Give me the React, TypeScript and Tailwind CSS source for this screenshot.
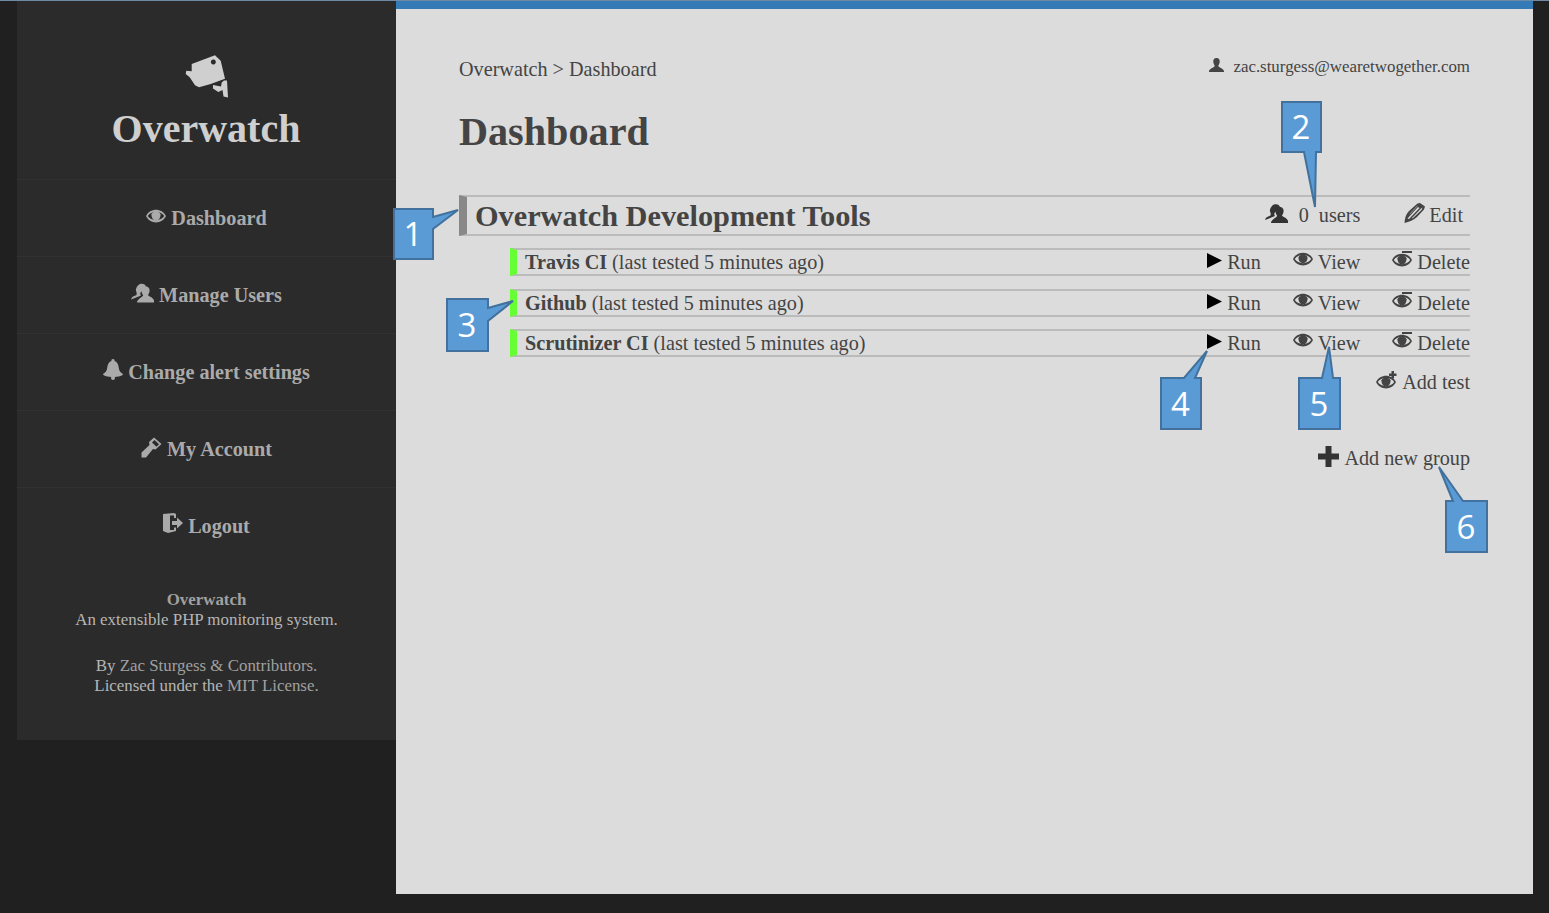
import type { ReactNode } from 'react'

type IconProps = { className?: string }

/* ── Icons ── */
function CameraIcon({ className }: IconProps) {
  return (
    <svg viewBox="0 0 43 44" className={className} fill="currentColor">
      <path fillRule="evenodd" d="M6.700 10 L30 1.300 L35.700 6.700 L40 24.700 L25.700 30 L14 33.300 L10 31.300 L4.700 23.300 L0.700 20 L1.300 16.700 L6.700 17.300 Z M28.300 5.500 a2.500 2.500 0 1 0 0.100 0 Z" />
      <path d="M28 31 L33.300 32 L36 32.500 L36.700 28.500 L39 26.500 L42 26.500 L43 43.500 L38.500 42.500 L37.500 36 L33.300 38 L28 34.500 Z" />
    </svg>
  )
}

function EyeIcon({ className }: IconProps) {
  return (
    <svg viewBox="0 0 20 14" className={className} fill="currentColor">
      <path fillRule="evenodd" d="M0 7 C4 -1.500 16 -1.500 20 7 C16 15.500 4 15.500 0 7 Z M1.800 7 C5 12.500 15 12.500 18.200 7 C15 1.500 5 1.500 1.800 7 Z" />
      <path d="M5.500 5.200 C7 1.500 13 1.500 14.500 5.200 C14.800 9 12.500 11.300 10 11.300 C7.500 11.300 5.200 9 5.500 5.200 Z" />
    </svg>
  )
}

function EyeDashIcon({ className }: IconProps) {
  return (
    <svg viewBox="0 0 20 16" className={className} fill="currentColor">
      <path fillRule="evenodd" d="M0 9 C4 .5 16 .5 20 9 C16 17.500 4 17.500 0 9 Z M1.800 9 C5 14.500 15 14.500 18.200 9 C15 3.500 5 3.500 1.800 9 Z" />
      <path d="M5.500 7.200 C7 3.500 13 3.500 14.500 7.200 C14.800 11 12.500 13.300 10 13.300 C7.500 13.300 5.200 11 5.500 7.200 Z" />
      <rect x="10" y="0" width="10" height="2" />
    </svg>
  )
}

function EyePlusIcon({ className }: IconProps) {
  return (
    <svg viewBox="0 0 21 18" className={className} fill="currentColor">
      <path fillRule="evenodd" d="M0 11 C4 2.500 16 2.500 20 11 C16 19.500 4 19.500 0 11 Z M1.800 11 C5 16.500 15 16.500 18.200 11 C15 5.500 5 5.500 1.800 11 Z" />
      <path d="M5.500 9.200 C7 5.500 13 5.500 14.500 9.200 C14.800 13 12.500 15.300 10 15.300 C7.500 15.300 5.200 13 5.500 9.200 Z" />
      <path d="M15.500 0 H18 V2.500 H20.500 V5 H18 V7.500 H15.500 V5 H13 V2.500 H15.500 Z" />
    </svg>
  )
}

function UsersIcon({ className }: IconProps) {
  return (
    <svg viewBox="0 0 23 19" className={className} fill="currentColor">
      <path d="M9 0.500 C12 -0.500 14.500 1 15 3 L9.500 9 C9 10.500 9.500 11.500 10 12 L4 14.500 L0 16 C0.500 13.500 2 12.800 5.500 11.500 C6 9.500 5.500 8.500 5 7.500 C4.500 5 6.500 1.500 9 0.500 Z" />
      <path d="M14.500 3 C17.500 3 19 5 18.500 8 C18.300 9.500 17.500 10.500 17 11.500 C17.500 13 22 13.500 23 17 L23 19 L6 19 C6 15.500 11.500 13.500 12.200 12 C11.500 10.500 10.500 9.500 10.500 7.500 C10.500 5 12 3 14.500 3 Z" />
    </svg>
  )
}

function UserIcon({ className }: IconProps) {
  return (
    <svg viewBox="0 0 15 14" className={className} fill="currentColor">
      <path d="M7.500 0 C10 0 11 1.800 10.700 4 C10.500 5.800 9.600 6.800 9.300 8 C9.600 9.500 14 10 15 13 L15 14 L0 14 L0 13 C1 10 5.400 9.500 5.700 8 C5.400 6.800 4.500 5.800 4.300 4 C4 1.800 5 0 7.500 0 Z" />
    </svg>
  )
}

function BellIcon({ className }: IconProps) {
  return (
    <svg viewBox="0 0 20 21" className={className} fill="currentColor">
      <path d="M10 0 C11.200 0 11.800 0.800 11.600 2 C14.500 3 15.500 6 15.800 9 C16 12 18 14 20 15 C20 17 15 18 10 18 C5 18 0 17 0 15 C2 14 4 12 4.200 9 C4.500 6 5.500 3 8.400 2 C8.200 0.800 8.800 0 10 0 Z" />
      <circle cx="10" cy="19" r="2" />
    </svg>
  )
}

function KeyIcon({ className }: IconProps) {
  return (
    <svg viewBox="0 0 21 21" className={className} fill="currentColor">
      <path fillRule="evenodd" d="M13 0.500 L20.500 7 L14.500 12.500 L12 12 L5 20.500 L0.500 20.500 L0.500 15.500 L8.500 8 L8 5 Z M13.500 3 L11 5.500 L15.500 9.800 L18 7.200 Z" />
    </svg>
  )
}

function LogoutIcon({ className }: IconProps) {
  return (
    <svg viewBox="0 0 20 20" className={className} fill="currentColor">
      <path d="M0 1 L11 0 L13 1 L13 5 L11 5 L11 2.500 L7 2.500 L7 17 L11 17 L11 14.500 L13 14.500 L13 18 L5 20 L0 18 Z" />
      <path d="M9 8 L14 8 L14 4.500 L20 10 L14 15.500 L14 12 L9 12 Z" />
    </svg>
  )
}

function PencilIcon({ className }: IconProps) {
  return (
    <svg viewBox="0 0 21 20" className={className} fill="currentColor">
      <path fillRule="evenodd" d="M0.500 20 C0.800 15 2 11 5 8 L13.500 0.500 L16 0 L21 3.500 L20 6.500 L13 14 C10 17 5 19 0.500 20 Z M3.500 15.500 L14 4 L15.500 5 L5 16 Z M7.500 15.500 L17 5.500 L18.500 4.500 L17.500 7 L9 15 Z M5 11.500 L13 3 L14 2.500 L6.500 10.500 Z" />
    </svg>
  )
}

function PlayIcon({ className }: IconProps) {
  return (
    <svg viewBox="0 0 15 15" className={className} fill="currentColor">
      <path d="M0 0 L15 7.500 L0 15 Z" />
    </svg>
  )
}

function PlusIcon({ className }: IconProps) {
  return (
    <svg viewBox="0 0 21 21" className={className} fill="currentColor">
      <path d="M7.500 0 H13.500 V7.500 H21 V13.500 H13.500 V21 H7.500 V13.500 H0 V7.500 H7.500 Z" />
    </svg>
  )
}

/* ── Annotation callouts drawn over the screenshot ── */
type CalloutDef = { n: number; x: number; y: number; w: number; h: number; outline: string }

const CALLOUTS: CalloutDef[] = [
  { n: 1, x: 393, y: 208, w: 40, h: 51, outline: '2,2 41,2 41,10 66,3 41,22 41,52 2,52' },
  { n: 2, x: 1281, y: 101, w: 40, h: 51, outline: '2,2 41,2 41,52 36,52 35,107 24,52 2,52' },
  { n: 3, x: 446, y: 298, w: 42, h: 53, outline: '2,2 43,2 43,11 68,4 43,24 43,54 2,54' },
  { n: 4, x: 1160, y: 377, w: 41, h: 52, outline: '2,2 25,2 48,-25 36,2 42,2 42,53 2,53' },
  { n: 5, x: 1298, y: 377, w: 42, h: 52, outline: '2,2 25,2 32,-29 36,2 43,2 43,53 2,53' },
  { n: 6, x: 1445, y: 500, w: 42, h: 52, outline: '2,2 9,2 -5,-32 19,2 43,2 43,53 2,53' },
]

function Callout({ n, x, y, w, h, outline }: CalloutDef) {
  return (
    <div className="absolute" style={{ left: x - 1, top: y - 1, width: w + 2, height: h + 2 }}>
      <svg className="absolute inset-0 overflow-visible" width={w + 2} height={h + 2}>
        <polygon points={outline} fill="#5b9bd5" stroke="#41719c" strokeWidth="2" />
      </svg>
      <span className="absolute inset-0 flex items-center justify-center font-['Open_Sans',sans-serif] text-[33px] leading-none text-white">
        {n}
      </span>
    </div>
  )
}

/* ── Sidebar ── */
const NAV: { label: string; icon: ReactNode }[] = [
  { label: 'Dashboard', icon: <EyeIcon className="w-[20px] h-[14px] mb-[4px]" /> },
  { label: 'Manage Users', icon: <UsersIcon className="w-[23px] h-[20px] mb-[4px]" /> },
  { label: 'Change alert settings', icon: <BellIcon className="w-[20px] h-[21px] mb-[5px]" /> },
  { label: 'My Account', icon: <KeyIcon className="w-[21px] h-[21px] mb-[4px]" /> },
  { label: 'Logout', icon: <LogoutIcon className="w-[20px] h-[20px] mb-[6px]" /> },
]

function Sidebar() {
  return (
    <aside className="w-[379px] h-[740px] ml-[17px] shrink-0 bg-[#2b2b2b] text-[#aaaaaa]">
      <div className="h-[179px] pt-[54px] pr-[1px] flex flex-col items-center">
        <CameraIcon className="w-[43px] h-[44px] text-[#cfcfcf]" />
        <div className="mt-[8px] text-[40px] leading-[46px] font-bold text-[#cfcfcf]">Overwatch</div>
      </div>
      {NAV.map(({ label, icon }) => (
        <div key={label} className="h-[77px] border-t border-[#323232] flex items-center justify-center gap-[5px] text-[20.200px] font-bold">
          {icon}
          <span>{label}</span>
        </div>
      ))}
      <div className="mt-[26px] text-center text-[16.900px] leading-[20px] text-[#b5b5b5]">
        <div className="font-bold text-[#a0a0a0]">Overwatch</div>
        <div>An extensible PHP monitoring system.</div>
        <div className="mt-[26px]">By <span className="text-[#a0a0a0]">Zac Sturgess &amp; Contributors.</span></div>
        <div>Licensed under the <span className="text-[#a0a0a0]">MIT License.</span></div>
      </div>
    </aside>
  )
}

/* ── Dashboard content ── */
const TESTS = [
  { name: 'Travis CI', mt: 'mt-[12px]' },
  { name: 'Github', mt: 'mt-[13px]' },
  { name: 'Scrutinizer CI', mt: 'mt-[12px]' },
]

function TestRow({ name, mt }: { name: string; mt: string }) {
  return (
    <div className={`${mt} ml-[51px] h-[28px] flex items-center justify-between border-l-[7px] border-l-[#66ff33] border-y-2 border-y-[#bbbbbb] pl-[8px] text-[20.200px] leading-none`}>
      <div><span className="font-bold">{name}</span> (last tested 5 minutes ago)</div>
      <div className="flex items-center gap-[32px]">
        <span className="flex items-center gap-[5px]">
          <PlayIcon className="w-[15px] h-[15px] text-black mb-[3px]" />Run
        </span>
        <span className="flex items-center gap-[5px]">
          <EyeIcon className="w-[20px] h-[14px] mb-[5px]" />View
        </span>
        <span className="flex items-center gap-[5px]">
          <EyeDashIcon className="w-[20px] h-[16px] mb-[6px]" />Delete
        </span>
      </div>
    </div>
  )
}

function Content() {
  return (
    <main className="w-[1137px] h-[893px] mt-px shrink-0 bg-[#dcdcdc] border-t-8 border-t-[#337ab7] px-[63px] text-[#444444]">
      <div className="pt-[48px] flex items-center justify-between">
        <div className="text-[20.200px] leading-[24px]">Overwatch &gt; Dashboard</div>
        <div className="flex items-center gap-[9px] text-[16.900px] leading-[20px] -mt-[5px]">
          <UserIcon className="w-[15px] h-[14px] mb-[3px]" />
          zac.sturgess@wearetwogether.com
        </div>
      </div>
      <h1 className="mt-[28px] text-[40.200px] leading-[46px] font-bold">Dashboard</h1>
      <div className="mt-[40px] h-[41px] flex items-center justify-between border-l-[8px] border-l-[#888888] border-y-2 border-y-[#bbbbbb] pl-[8px] pr-[7px]">
        <div className="pt-px text-[30.300px] font-bold leading-none">Overwatch Development Tools</div>
        <div className="flex items-center text-[20.200px] leading-none">
          <UsersIcon className="w-[23px] h-[19px] mb-[5px] text-[#333333]" />
          <span className="ml-[11px]">0</span>
          <span className="ml-[10px]">users</span>
          <PencilIcon className="ml-[44px] w-[21px] h-[20px] mb-[5px]" />
          <span className="ml-[4px]">Edit</span>
        </div>
      </div>
      {TESTS.map((t) => <TestRow key={t.name} {...t} />)}
      <div className="mt-[13px] flex items-center justify-end gap-[5px] text-[20.200px] leading-[24px]">
        <EyePlusIcon className="w-[21px] h-[18px] mb-[5px]" />Add test
      </div>
      <div className="mt-[51px] flex items-center justify-end gap-[5px] text-[20.200px] leading-[26px]">
        <PlusIcon className="w-[21px] h-[21px] mb-[3px] text-[#333333]" />Add new group
      </div>
    </main>
  )
}

export default function App() {
  return (
    <div className="relative w-[1549px] h-[913px] overflow-hidden bg-[#202020] flex items-start font-['Liberation_Serif',serif]">
      <div className="absolute top-0 inset-x-0 h-px bg-[#6f8aa5]" />
      <Sidebar />
      <Content />
      {CALLOUTS.map((c) => <Callout key={c.n} {...c} />)}
    </div>
  )
}
